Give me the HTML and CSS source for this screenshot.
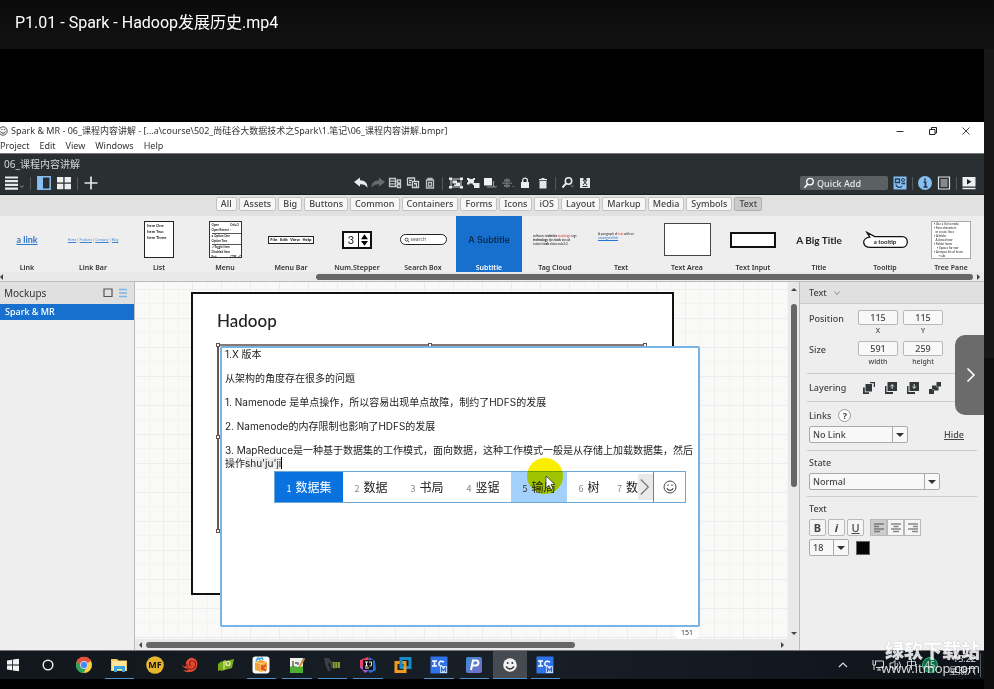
FILE: index.html
```html
<!DOCTYPE html>
<html lang="zh-CN">
<head>
<meta charset="utf-8">
<meta name="viewport" content="width=device-width, initial-scale=1">
<title>P1.01 - Spark - Hadoop发展历史.mp4</title>
<link rel="stylesheet" href="styles.css">
</head>
<body>
<header class="player-head"><h1>P1.01 - Spark - Hadoop发展历史.mp4</h1></header>
<main class="player">
<section class="video">
  <div class="win">
    <div class="titlebar">
      <svg class="app-ico" viewBox="0 0 10 10"><circle cx="3" cy="5" r="4.200" fill="#f4f4f4" stroke="#555"/><path d="M.5 5.500Q3 9 5.500 5.500M2 3v1M4.500 3v1" fill="none" stroke="#444"/></svg>
      <span class="win-title">Spark &amp; MR - 06_课程内容讲解 - [...a\course\502_尚硅谷大数据技术之Spark\1.笔记\06_课程内容讲解.bmpr]</span>
      <div class="win-btns">
        <button aria-label="Minimize"><svg viewBox="0 0 12 12"><path d="M2.500 6.500h7" stroke="#333" fill="none"/></svg></button>
        <button aria-label="Restore"><svg viewBox="0 0 12 12"><path d="M2.500 4.500h5.500v5h-5.500zM4.500 4.200V2.500h5v5.500H8" stroke="#222" fill="none"/></svg></button>
        <button aria-label="Close"><svg viewBox="0 0 12 12"><path d="M2.500 2.500l7 7M9.500 2.500l-7 7" stroke="#444" fill="none"/></svg></button>
      </div>
    </div>
    <nav class="menubar"><a href="#">Project</a><a href="#">Edit</a><a href="#">View</a><a href="#">Windows</a><a href="#">Help</a></nav>
  </div>

  <div class="dark">
    <div class="doc">06_课程内容讲解</div>
    <div class="tools">
      <div class="tools-left">
        <button class="wide" aria-label="Main menu"><svg viewBox="0 0 20 14"><path d="M1 1.500h13M1 5.200h13M1 8.900h13M1 12.600h13" stroke="#e8ebec" stroke-width="2.200"/><path d="M16 9.500l1.800 2 1.800-2" stroke="#8b9194" fill="none"/></svg></button>
        <i class="sep"></i>
        <button aria-label="Navigator"><svg viewBox="0 0 14 14"><path d="M.8.8h12.400v12.400H.8z" fill="none" stroke="#86bff0" stroke-width="1.500"/><path d="M1 1h5v12H1z" fill="#86bff0"/></svg></button>
        <button aria-label="Grid"><svg viewBox="0 0 14 14"><path d="M0 1h6.300v5.500H0zM7.600 1H14v5.500H7.600zM0 7.800h6.300v5.500H0zM7.600 7.800H14v5.500H7.600z" fill="#eceeef"/></svg></button>
        <i class="sep"></i>
        <button aria-label="Add"><svg viewBox="0 0 14 14"><path d="M.5 7h13M7 .5v13" stroke="#e3e6e7" stroke-width="1.700"/></svg></button>
      </div>
      <div class="tools-mid">
        <button aria-label="Undo"><svg viewBox="0 0 14 14"><path d="M0 6l6-4.500v2.700c5 .2 7.500 2.800 7.500 7.500-1.800-2.600-3.800-3.600-7.500-3.500v2.500z" fill="#e8ebec"/></svg></button>
        <button aria-label="Redo"><svg viewBox="0 0 14 14"><path d="M14 6L8 1.500v2.700C3 4.400.5 7 .5 11.700 2.300 9.100 4.300 8.100 8 8.200v2.500z" fill="#656b6e"/></svg></button>
        <button aria-label="Duplicate"><svg viewBox="0 0 14 14"><path d="M1.500 2.500h6v8h-6zM1.500 5.200h6M1.500 7.800h6M9.500 4h3v3h-3zM9.500 8.500h3v3h-3zM8 5.500h1M8 10h1" stroke="#c3c8ca" stroke-width="1.300" fill="none"/></svg></button>
        <button aria-label="Copy"><svg viewBox="0 0 14 14"><path d="M1.500 2h7v3M1.500 2v7h4M3 4.500h3M3 6.700h2M6.500 5.500h6v6h-6z" stroke="#d0d4d6" stroke-width="1.300" fill="none"/><path d="M8 7h3v4H9.800V8.500H8z" fill="#d0d4d6"/></svg></button>
        <button aria-label="Paste"><svg viewBox="0 0 14 14"><path d="M3.500 4h7v8h-7zM5 4V2.500h4V4M5.500 6.500h3v3.500h-3z" stroke="#b9bec0" stroke-width="1.300" fill="none"/></svg></button>
        <i class="sep"></i>
        <button aria-label="Group"><svg viewBox="0 0 14 14"><path d="M2 3h10v8H2z" stroke="#cfd3d5" fill="none"/><path d="M0 1.500h3v2.500H0zM11 1.500h3v2.500h-3zM0 10h3v2.500H0zM11 10h3v2.500h-3zM3.500 4.500h4.500v3H3.500zM7 6.500h4v3.500H5V8.500h2z" fill="#e8ebec"/></svg></button>
        <button aria-label="Ungroup"><svg viewBox="0 0 14 14"><path d="M1 2h2.500v1H7V2h2v2H8v3h1v1.500H6.500V7.500H3.500v1H1V6.500h1V4H1zM7 7h6.500v5H8V9H7z" fill="#e8ebec"/></svg></button>
        <button aria-label="Bring to front"><svg viewBox="0 0 14 14"><path d="M1 2h8v7.500H1z" fill="#f0f2f3"/><path d="M4 11h6.500V5M11 10l1.300 1.500L13.600 10" stroke="#9ba1a3" fill="none"/></svg></button>
        <button aria-label="Align"><svg viewBox="0 0 14 14"><path d="M3 3.500h6v2H3zM1 6.500h10v1.200H1zM3 8.700h6v2H3zM5.500 2h1v10h-1z" fill="#70777a"/><path d="M11.500 10l1 1 1-1" stroke="#70777a" fill="none"/></svg></button>
        <button aria-label="Lock"><svg viewBox="0 0 14 14"><path d="M3 6h8v6H3z" fill="#eceeef"/><path d="M4.700 6V4.300c0-2.800 4.600-2.800 4.600 0V6" stroke="#eceeef" stroke-width="1.300" fill="none"/></svg></button>
        <button aria-label="Delete"><svg viewBox="0 0 14 14"><path d="M3.500 5h7v7.500h-7zM3 3h8v1.300H3zM5.500 2h3v1h-3z" fill="#e3e6e7"/></svg></button>
        <i class="sep"></i>
        <button aria-label="Zoom"><svg viewBox="0 0 14 14"><circle cx="7.500" cy="5" r="3.200" stroke="#e8ebec" stroke-width="1.500" fill="none"/><path d="M5 7.500L1.500 11.500" stroke="#e8ebec" stroke-width="1.900"/><path d="M10 9.500l1.300 1.300 1.300-1.300" stroke="#9ba1a3" fill="none"/></svg></button>
        <button aria-label="Find"><svg viewBox="0 0 14 14"><path d="M2 2h3.500v2.500h3V2H12v10H2z" fill="#e3e6e7"/><path d="M5 4l4 5M9 4L5 9M4.500 10.500h5" stroke="#2a2f32" fill="none"/></svg></button>
      </div>
      <div class="tools-right">
        <label class="quick"><svg viewBox="0 0 12 12"><circle cx="7" cy="4.600" r="3.300" stroke="#fff" stroke-width="1.300" fill="none"/><path d="M4.800 7L1.500 10.800" stroke="#fff" stroke-width="1.600"/></svg><input type="text" placeholder="Quick Add" aria-label="Quick Add"></label>
        <button aria-label="UI library"><svg viewBox="0 0 14 14"><path d="M.5.5h13v13H.5z" fill="#86bff0"/><path d="M2.500 3h4v3.500h-4zM8.500 7.500h3v-1M3 8.500c.5 3.500 5 3.500 6 1.500" stroke="#26405a" stroke-width="1.300" fill="none"/><circle cx="10" cy="4" r="1.500" stroke="#26405a" fill="none"/></svg></button>
        <i class="sep"></i>
        <button aria-label="Properties"><svg viewBox="0 0 14 14"><circle cx="7" cy="7" r="7" fill="#86bff0"/><path d="M7 2.500v2M5.500 6H7.500v5M5.500 11h4" stroke="#223548" stroke-width="1.700" fill="none"/></svg></button>
        <button aria-label="Notes"><svg viewBox="0 0 14 14"><path d="M1.500 1h11v12h-11zM3.500 4h7M3.500 6h7M3.500 8h7M3.500 10h7" stroke="#dfe3e4" stroke-width="1.200" fill="none"/></svg></button>
        <i class="sep"></i>
        <button aria-label="Present"><svg viewBox="0 0 14 14"><path d="M.5 1h13v9.500H.5zM.5 11.800h13v1.400H.5z" fill="#eceeef"/><path d="M5 3l4.500 2.700L5 8.400z" fill="#222"/></svg></button>
      </div>
    </div>
  </div>

  <nav class="tabs">
    <button>All</button><button>Assets</button><button>Big</button><button>Buttons</button><button>Common</button><button>Containers</button><button>Forms</button><button>Icons</button><button>iOS</button><button>Layout</button><button>Markup</button><button>Media</button><button>Symbols</button><button class="on">Text</button>
  </nav>

  <div class="library">
    <div class="shelf">
      <figure><div class="pic"><span class="p-link">a link</span></div><figcaption>Link</figcaption></figure>
      <figure><div class="pic"><span class="p-linkbar"><u>Home</u> | <u>Products</u> | <u>Company</u> | <u>Blog</u></span></div><figcaption>Link Bar</figcaption></figure>
      <figure><div class="pic"><span class="p-list">Item One<br>Item Two<br>Item Three</span></div><figcaption>List</figcaption></figure>
      <figure><div class="pic"><span class="p-menu"><b>Open</b><b>Ctrl+O</b><b>Open Recent</b><b>›</b><i></i><b>● Option One</b><b></b><b>Option Two</b><b></b><i></i><b>✓ Toggle Item</b><b></b><b>Disabled Item</b><b></b><b>Exit</b><b>CTRL+Q</b></span></div><figcaption>Menu</figcaption></figure>
      <figure><div class="pic"><span class="p-menubar"><b>File</b><b>Edit</b><b>View</b><b>Help</b></span></div><figcaption>Menu Bar</figcaption></figure>
      <figure><div class="pic"><span class="p-step"><b>3</b><svg viewBox="0 0 12 16"><path d="M6 1.500l4 5.500H2zM6 14.500l4-5.500H2z"/></svg></span></div><figcaption>Num.Stepper</figcaption></figure>
      <figure><div class="pic"><span class="p-search"><svg viewBox="0 0 8 8"><circle cx="3.500" cy="3.500" r="2" fill="none" stroke="#222"/><path d="M5 5l2 2" stroke="#222"/></svg>search</span></div><figcaption>Search Box</figcaption></figure>
      <figure class="sel"><div class="pic"><span class="p-sub">A Subtitle</span></div><figcaption>Subtitle</figcaption></figure>
      <figure><div class="pic"><span class="p-cloud">software <b>statistics</b> <em>teachings</em> tags <b>technology</b> tips <b>tools</b> toread tutorial <b>web</b> video web2.0</span></div><figcaption>Tag Cloud</figcaption></figure>
      <figure><div class="pic"><span class="p-text">A paragraph of <em>text</em> with an <u>unassigned link</u></span></div><figcaption>Text</figcaption></figure>
      <figure><div class="pic"><span class="p-area"></span></div><figcaption>Text Area</figcaption></figure>
      <figure><div class="pic"><span class="p-input"></span></div><figcaption>Text Input</figcaption></figure>
      <figure><div class="pic"><span class="p-big">A Big Title</span></div><figcaption>Title</figcaption></figure>
      <figure><div class="pic"><span class="p-tip"><svg viewBox="0 0 48 18"><path d="M8 6L5 1.200l8 4.300h28c7 0 7 11 0 11H9C0 16.500-1 7 8 6z" fill="#fff" stroke="#111" stroke-width="1.300"/></svg><b>a tooltip</b></span></div><figcaption>Tooltip</figcaption></figure>
      <figure><div class="pic"><span class="p-tree">▪ Use a list to make<br>▪ Four characters<br>&nbsp; or create lines<br>▪ A folder<br>&nbsp; A closed row<br>▪ Folder items<br>&nbsp; &nbsp; ▪ Spaces for row<br>▪ An open list of items<br>&nbsp; &nbsp; &nbsp; ▪ sub</span></div><figcaption>Tree Pane</figcaption></figure>
    </div>
    <div class="hbar shelf-bar"><i class="tri l"></i><span class="track"><span class="thumb"></span></span><i class="tri r"></i></div>
  </div>

  <div class="work">
    <aside class="nav">
      <div class="nav-head"><h2>Mockups</h2>
        <button aria-label="Thumbnails"><svg viewBox="0 0 10 10"><path d="M1 1h8v7.500H1z" fill="none" stroke="#555" stroke-width="1.200"/></svg></button>
        <button aria-label="List view"><svg viewBox="0 0 10 10"><path d="M1 1.500h8M1 5h8M1 8.500h8" stroke="#7db7e6" stroke-width="1.500"/></svg></button>
      </div>
      <a class="nav-item" href="#">Spark &amp; MR</a>
    </aside>

    <div class="center">
      <div class="canvas-row">
        <div class="canvas">
          <div class="page"><h2>Hadoop</h2></div>
          <div class="selection"><i></i><i></i><i></i><i></i><i></i></div>
          <div class="editor" contenteditable="true" spellcheck="false" role="textbox" aria-label="Text">
            <p>1.X 版本</p>
            <p>从架构的角度存在很多的问题</p>
            <p>1. Namenode 是单点操作，所以容易出现单点故障，制约了HDFS的发展</p>
            <p>2. Namenode的内存限制也影响了HDFS的发展</p>
            <p>3. MapReduce是一种基于数据集的工作模式，面向数据，这种工作模式一般是从存储上加载数据集，然后操作<span class="compose">shu'ju'ji</span></p>
          </div>
          <span class="count">151</span>
          <div class="ime">
            <button class="first"><small>1</small>数据集</button>
            <button class="w2"><small>2</small>数据</button>
            <button class="w2"><small>3</small>书局</button>
            <button class="w2"><small>4</small>竖锯</button>
            <button class="w2 hover"><small>5</small>输局</button>
            <button class="w1"><small>6</small>树</button>
            <button class="cut"><small>7</small>数</button>
            <button class="more" aria-label="More"><svg viewBox="0 0 16 26"><path d="M3 5l8 8-8 8" fill="none" stroke="#777" stroke-width="1.300"/></svg></button>
            <button class="emoji" aria-label="Emoji"><svg viewBox="0 0 14 14"><circle cx="7" cy="7" r="6" fill="none" stroke="#444"/><path d="M3.800 8.300c1 2.800 5.400 2.800 6.400 0M5 4.500v1.500M9 4.500v1.500" fill="none" stroke="#444" stroke-width="1.100"/></svg></button>
          </div>
          <i class="halo"></i>
          <svg class="cursor" viewBox="0 0 12 16"><path d="M1 1v12l3-2.700 2 4.200 2-1-2-4h4z" fill="#fff" stroke="#333" stroke-width=".8"/></svg>
        </div>
        <div class="vbar"><i class="tri u"></i><span class="track"><span class="thumb"></span></span><i class="tri d"></i></div>
      </div>
      <div class="hbar canvas-bar"><i class="tri l"></i><span class="track"><span class="thumb"></span></span><i class="tri r"></i></div>
    </div>

    <aside class="props">
      <h2>Text <svg viewBox="0 0 8 8"><path d="M1.500 2.500L4 5.500l2.500-3" fill="none" stroke="#888"/></svg></h2>
      <div class="prop-body">
        <section>
          <div class="pair"><span class="lab">Position</span>
            <label><input type="text" value="115">X</label><label><input type="text" value="115">Y</label></div>
          <div class="pair"><span class="lab">Size</span>
            <label><input type="text" value="591">width</label><label><input type="text" value="259">height</label></div>
        </section>
        <section class="layering"><span class="lab">Layering</span>
          <button aria-label="To front"><svg viewBox="0 0 12 12"><path d="M2.500 2H9v7.500H2.500zM0 5.500h1.800V10.300H6V12H0zM7 0h5v5h-1.300V1.300H7z" fill="#33383a"/></svg></button>
          <button aria-label="Forward"><svg viewBox="0 0 12 12"><path d="M2.500 0H12v9H2.500zM0 4h1.500v6H8v2H0z" fill="#33383a"/><path d="M7.200 7V3M5.500 4.500l1.700-2 1.700 2" fill="none" stroke="#ddd"/></svg></button>
          <button aria-label="Backward"><svg viewBox="0 0 12 12"><path d="M2.500 0H12v9H2.500zM0 4h1.500v6H8v2H0z" fill="#33383a"/><path d="M7.200 2v4M5.500 4.500l1.700 2 1.700-2" fill="none" stroke="#ddd"/></svg></button>
          <button aria-label="To back"><svg viewBox="0 0 12 12"><path d="M7.500 0H12v4.500H9.500V8.500H5V12H0V7h3V3.500h4.500z" fill="#33383a"/><path d="M7.500 3.500V5H9.500M3 7.500h2v1" stroke="#aaa" stroke-width=".6" fill="none"/></svg></button>
        </section>
        <section class="links">
          <div class="line"><label for="lk">Links</label><button class="help" aria-label="Help">?</button></div>
          <div class="line spread"><span class="sel-box link-sel"><select id="lk"><option>No Link</option></select></span><a href="#">Hide</a></div>
        </section>
        <section class="state">
          <label for="st">State</label>
          <span class="sel-box"><select id="st"><option>Normal</option></select></span>
        </section>
        <section class="textsec">
          <span>Text</span>
          <div class="line fmt"><button><b>B</b></button><button><i>i</i></button><button><u>U</u></button>
            <span class="aligns">
              <button class="on" aria-label="Left"><svg viewBox="0 0 12 12"><path d="M1 2h10M1 4.500h5M1 7h10M1 9.500h6" stroke="#777" stroke-width="1.300"/></svg></button>
              <button aria-label="Center"><svg viewBox="0 0 12 12"><path d="M1 2h10M3.500 4.500h5M1 7h10M3 9.500h6" stroke="#888" stroke-width="1.300"/></svg></button>
              <button aria-label="Right"><svg viewBox="0 0 12 12"><path d="M1 2h10M6 4.500h5M1 7h10M5 9.500h6" stroke="#888" stroke-width="1.300"/></svg></button>
            </span>
          </div>
          <div class="line"><span class="sel-box size-sel"><select aria-label="Font size"><option>18</option></select></span><button class="swatch" aria-label="Colour"></button></div>
        </section>
      </div>
    </aside>
  </div>

  <footer class="taskbar">
    <div class="apps">
      <button aria-label="Start"><svg viewBox="0 0 18 18"><path d="M3 4.500l5-.8v4.900H3zM8.800 3.600L15 2.700v5.900H8.800zM3 9.400h5v4.900l-5-.8zM8.800 9.400H15v5.900l-6.200-.9z" fill="#f2f2f2"/></svg></button>
      <button aria-label="Search"><svg viewBox="0 0 18 18"><circle cx="9" cy="9" r="4.800" fill="none" stroke="#e8e8e8" stroke-width="1.500"/></svg></button>
      <button aria-label="Chrome"><svg viewBox="0 0 18 18"><circle cx="9" cy="9" r="8" fill="#ffd044"/><path d="M9 9L2.100 5A8 8 0 0 1 15.900 5z" fill="#e5503c"/><path d="M9 9L2.100 5a8 8 0 0 0 6.400 12l3.300-6z" fill="#28a35a"/><path d="M9 5h7a8 8 0 0 0-14-.2L5.500 11z" fill="#e5503c"/><circle cx="9" cy="9" r="3.700" fill="#4587f4" stroke="#e8f0ee" stroke-width=".8"/></svg></button>
      <button class="run" aria-label="Explorer"><svg viewBox="0 0 18 18"><path d="M1 3h6l1.500 1.500H17V15H1z" fill="#f2c75e"/><path d="M2 5h14v9H2z" fill="#ffe49a"/><path d="M4 10h11v6h-3v-3H7v3H4z" fill="#35a4df"/></svg></button>
      <button aria-label="MF"><svg viewBox="0 0 18 18"><circle cx="9" cy="9" r="8.800" fill="#e6b62e"/><text x="9" y="12.400" text-anchor="middle" class="mf">MF</text></svg></button>
      <button aria-label="Shell"><svg viewBox="0 0 18 18"><path d="M1 8c1 3 3 3 4 2C4 5 8 1 12 2c5 1 6 8 2 12-4 3-9 3-12 0 4 1 6 0 6 0C5 12 1 12 1 8z" fill="#e34a32"/><path d="M10 10c-3-2-1-6 2-5 4 1 3 7-1 8-3 .5-6-2-5-5" fill="none" stroke="#8f2019" stroke-width="1.100"/></svg></button>
      <button aria-label="Design"><svg viewBox="0 0 18 18"><path d="M1 8l4-3-1 9-3 1zM4 6l13-3-2 9-11 3z" fill="#78aa20"/><path d="M6 5l3-1-1 9-2 1z" fill="#b6d44f"/><circle cx="11" cy="7.500" r="2" fill="none" stroke="#eef6c8" stroke-width="1.200"/></svg></button>
      <button class="run" aria-label="Player"><svg viewBox="0 0 18 18"><rect x=".5" y=".5" width="17" height="17" rx="3" fill="#fafafa"/><path d="M3 6l6-2 6 2v8l-6 2-6-2z" fill="#f4a338"/><path d="M3 6l6 2 6-2M9 8v8" stroke="#ffd77b" fill="none"/><path d="M4 5l2-3 2 2M7 3l3-1 1 2" stroke="#35a7dc" stroke-width="1.500" fill="none"/><path d="M10 9v5M14 9l-4 3 4 3" stroke="#e24d26" stroke-width="1.700" fill="none"/></svg></button>
      <button class="run" aria-label="Editor"><svg viewBox="0 0 18 18"><path d="M2 2h13v15H2z" fill="#eef0e8"/><path d="M2 11c4-3 8 2 13-1v7H2z" fill="#4fae35"/><path d="M5 5v6M7 7h2M10 6v3M11 12l5-10" stroke="#555" stroke-width="1.300"/><path d="M11 11l5-9 1 1-5 9z" fill="#ea9c2a"/></svg></button>
      <button class="run" aria-label="Screen tool"><svg viewBox="0 0 18 18"><path d="M1 2h5l2 4-3 2 3 7H5L2 8z" fill="#3a4044"/><path d="M7 5l5 1v7l-4-1z" fill="#3f4a34"/><path d="M10 6h7v6h-7z" fill="#8b9e38"/><path d="M12 6v6M14.500 6v6" stroke="#4f621e"/></svg></button>
      <button class="run" aria-label="IntelliJ"><svg viewBox="0 0 18 18"><path d="M1 4l8-3 2 6-7 7-3-2z" fill="#e84364"/><path d="M10 1l6 4 1 9-6 3-3-4z" fill="#2171df"/><path d="M1 11l5-2 3 6-3 2z" fill="#a25bd0"/><path d="M4 4h10v10H4z" fill="#141414"/><path d="M6 6h3M7.500 6v4M6 10h3M10 6h2.500v3q0 1.500-2 1M6 12h4" stroke="#eee" fill="none"/></svg></button>
      <button aria-label="VMware"><svg viewBox="0 0 18 18"><path d="M7 2.500h9v9H7z" fill="none" stroke="#168bc8" stroke-width="3"/><path d="M2 6.500h9v9H2z" fill="none" stroke="#f29a1d" stroke-width="3"/><path d="M7 4v6" stroke="#168bc8" stroke-width="3"/></svg></button>
      <button class="run" aria-label="ICM"><svg viewBox="0 0 18 18"><path d="M.5.5h17v17H.5z" fill="#2f72ea"/><path d="M2 5h5M4.500 5v5M2 10h5M14 6q-4-2-5 1t3 3" fill="none" stroke="#fff" stroke-width="1.500"/><path d="M10 10h7v7h-7z" fill="#c9dcff"/><path d="M11.500 16v-4l2 2.500 2-2.500v4" fill="none" stroke="#2767cf" stroke-width="1.200"/></svg></button>
      <button class="run" aria-label="P"><svg viewBox="0 0 18 18"><defs><linearGradient id="pg" x2="1" y2="1"><stop stop-color="#3b8dd0"/><stop offset="1" stop-color="#786bc8"/></linearGradient></defs><rect x="1" y="1" width="16" height="16" rx="2" fill="url(#pg)"/><path d="M6 14L8 4.500h3.500c3 0 2.500 5-1 5H7.500" stroke="#fff" stroke-width="2" fill="none"/></svg></button>
      <button class="run active" aria-label="Balsamiq"><svg viewBox="0 0 18 18"><circle cx="9" cy="9" r="6.800" fill="#f1f1f1"/><path d="M5 10.500q4 5 8 0" fill="none" stroke="#333" stroke-width="1.300"/><circle cx="6.700" cy="7" r="1" fill="#333"/><circle cx="11.300" cy="7" r="1" fill="#333"/></svg></button>
      <button class="run" aria-label="ICM"><svg viewBox="0 0 18 18"><path d="M.5.5h17v17H.5z" fill="#2f72ea"/><path d="M2 5h5M4.500 5v5M2 10h5M14 6q-4-2-5 1t3 3" fill="none" stroke="#fff" stroke-width="1.500"/><path d="M10 10h7v7h-7z" fill="#c9dcff"/><path d="M11.500 16v-4l2 2.500 2-2.500v4" fill="none" stroke="#2767cf" stroke-width="1.200"/></svg></button>
    </div>
    <div class="tray">
      <svg class="up" viewBox="0 0 12 12"><path d="M2 8l4-4 4 4" fill="none" stroke="#ddd" stroke-width="1.200"/></svg>
      <svg viewBox="0 0 12 12"><path d="M3 2h8.500v6.500H4M1 1v5h2.500V2M2 6v5M5 11h4M7 9v2" fill="none" stroke="#d8d8d8"/></svg>
      <svg viewBox="0 0 12 12"><path d="M1 4h2.500L6 1.500v9L3.500 8H1zM8 4q2 2 0 4M10 2.500q3 3.500 0 7" fill="none" stroke="#ddd"/></svg>
      <span class="lang">中</span>
      <span class="badge">45</span>
      <time class="clock">15:22<br>星期六</time>
    </div>
  </footer>
  <div class="mark"><strong>绿软下载站</strong><span>www.itmop.com</span></div>
</section>
<button class="next" aria-label="Next"><svg viewBox="0 0 12 16"><path d="M2.500 1.500L9 8l-6.500 6.500" fill="none" stroke="#fff" stroke-width="1.600"/></svg></button>
<div class="edge"></div>
</main>
</body>
</html>
```
FILE: styles.css
```css
* { box-sizing: border-box; }
html, body { height: 100%; }
body {
  margin: 0;
  display: flex;
  flex-direction: column;
  overflow: hidden;
  background: #000;
  color: #333;
  font: 9px/12px "Noto Sans", "Open Sans", "Noto Sans CJK SC", sans-serif;
}
h1, h2, p, figure { margin: 0; font-weight: 400; }
button { padding: 0; border: 0; background: none; color: inherit; font: inherit; }
input, select { font: inherit; color: inherit; }
a { color: inherit; text-decoration: none; }
svg { display: block; flex: none; }

.player-head {
  flex: none;
  height: 49px;
  padding: 0 15px;
  display: flex;
  align-items: center;
  background: linear-gradient(#0b0b0b, #121212);
}
.player-head h1 { color: #fff; font: 16px/20px "Roboto", "Noto Sans CJK SC", sans-serif; padding-bottom: 4px; }
.player { flex: 1; min-height: 0; display: flex; position: relative; }
.video {
  flex: 1;
  min-width: 0;
  padding: 73px 0 10px;
  display: flex;
  flex-direction: column;
  position: relative;
  overflow: hidden;
}
.edge { flex: none; width: 10px; background: linear-gradient(#171717 309px, #0e0e0e 309px); }
.next {
  position: absolute;
  right: 10px;
  top: 286px;
  width: 29px;
  height: 80px;
  border-radius: 10px 0 0 10px;
  background: #6b6b6b;
  display: flex;
  align-items: center;
  justify-content: center;
}
.next svg { width: 12px; height: 16px; margin-left: 3px; }

/* window chrome */
.win { background: #fff; height: 31px; flex: none; }
.titlebar { display: flex; align-items: center; height: 17px; }
.app-ico { width: 10px; height: 10px; }
.win-title { flex: 1; margin-left: 1px; white-space: nowrap; }
.win-btns { display: flex; gap: 21px; padding-right: 12px; }
.win-btns svg { width: 12px; height: 12px; }
.menubar { display: flex; gap: 10px; line-height: 13px; }

/* dark toolbar */
.dark { flex: none; height: 42px; background: #2a2f32; border-top: 1px solid #777; border-bottom: 1px solid #1b1f21; }
.doc { height: 18px; padding: 3px 4px 0; font-size: 10px; line-height: 14px; color: #d4d7d8; }
.tools { height: 22px; display: grid; grid-template-columns: minmax(0, 352fr) 242px minmax(0, 390fr); align-items: center; }
.tools-left, .tools-right { display: flex; align-items: center; gap: 6px; }
.tools-left { padding-left: 4px; }
.tools-left svg, .tools-right button svg { width: 14px; height: 14px; }
.tools-left .wide svg { width: 20px; }
.tools-right { justify-content: flex-end; padding-right: 8px; gap: 5px; }
.tools-mid { display: grid; grid-template-columns: repeat(5, 1fr) 8px repeat(6, 1fr) 8px repeat(2, 1fr); align-items: center; justify-items: center; }
.tools-mid svg { width: 14px; height: 14px; }
.sep { width: 1px; height: 13px; background: #52585b; }
.quick { display: flex; align-items: center; width: 88px; height: 14px; padding-left: 3px; gap: 2px; background: #5b6063; border-radius: 2px; }
.quick svg { width: 12px; height: 12px; }
.quick input { width: 66px; height: 14px; padding: 0; border: 0; background: none; color: #fff; font-weight: 500; }
.quick input::placeholder { color: #e6e8e9; opacity: 1; }

.tabs { flex: none; height: 21px; display: flex; justify-content: center; align-items: center; gap: 2px; background: #e1e1e1; padding: 0 6px 3px 0; }
.tabs button { height: 14px; padding: 0 4px; line-height: 12px; border: 1px solid #c2c2c2; border-radius: 2px; background: #f7f7f7; color: #444; font-weight: 500; }
.tabs .on { background: #cbcbcb; border-color: #b0b0b0; }

/* component shelf */
.library { flex: none; height: 66px; background: #eee; border-bottom: 1px solid #bbb; }
.shelf { display: grid; grid-template-columns: repeat(15, minmax(0, 1fr)); margin-left: -6px; height: 56px; }
.shelf figure { display: flex; flex-direction: column; align-items: center; justify-content: space-between; overflow: hidden; }
.shelf .sel { background: #1770cd; color: #fff; }
figcaption { font: 600 7px/9px "Noto Sans", sans-serif; color: #333; white-space: nowrap; }
.sel figcaption { color: #fff; }
.pic { height: 47px; display: flex; align-items: center; justify-content: center; color: #222; }
.p-link { color: #3178c8; text-decoration: underline; font: 700 9px/12px "Lato", sans-serif; }
.p-linkbar { font-size: 3px; white-space: nowrap; color: #555; }
.p-linkbar u { color: #3f85d4; }
.p-list { width: 30px; height: 37px; padding: 1px 2px; border: 1px solid #222; background: #fff; font: 700 4px/6px "Lato", sans-serif; white-space: nowrap; }
.p-menu { width: 33px; height: 37px; padding: 1px 2px; border: 1px solid #333; background: #fff; display: grid; grid-template-columns: 1fr auto; font: 3px/5px "Lato", sans-serif; white-space: nowrap; overflow: hidden; }
.p-menu i { grid-column: 1 / -1; height: 1px; background: #555; }
.p-menubar { width: 46px; height: 8px; border: 1px solid #222; background: #fff; display: flex; justify-content: space-around; font-size: 4px; line-height: 6px; }
.p-step { width: 30px; height: 18px; border: 2px solid #111; background: #fff; display: flex; font: 11px/14px "Lato", sans-serif; }
.p-step b { flex: 1; text-align: center; font-weight: 400; border-right: 1px solid #111; }
.p-step svg { width: 11px; height: 14px; }
.p-search { width: 47px; height: 11px; padding-left: 3px; border: 1px solid #222; border-radius: 6px; background: #fff; display: flex; align-items: center; gap: 1px; font-size: 5px; line-height: 7px; color: #555; }
.p-search svg { width: 6px; height: 6px; }
.p-sub { color: #08213f; font: 500 9px/12px "Inter", sans-serif; }
.p-big { font: 700 10px/12px "Lato", sans-serif; white-space: nowrap; }
.p-cloud { width: 44px; font: 3px/4px "Lato", sans-serif; }
.p-cloud em, .p-text em { color: #d33; font-style: normal; }
.p-text { width: 46px; padding-bottom: 8px; font: 3px/4px "Lato", sans-serif; }
.p-text u { color: #2277d4; }
.p-area { width: 47px; height: 33px; border: 1px solid #444; background: #fff; }
.p-input { width: 46px; height: 16px; border: 2px solid #111; background: #fff; }
.p-tip { display: grid; place-items: center; }
.p-tip svg, .p-tip b { grid-area: 1 / 1; }
.p-tip svg { width: 47px; height: 18px; }
.p-tip b { font: 700 6px/8px "Lato", sans-serif; padding-top: 4px; }
.p-tree { width: 40px; height: 38px; padding: 0 2px; border: 1px solid #aaa; background: #fff; font: 3px/4px "Lato", sans-serif; white-space: nowrap; overflow: hidden; }

/* scroll bars */
.hbar { display: flex; align-items: center; gap: 4px; height: 9px; background: #e9e9e9; }
.hbar .track { flex: 1; height: 6px; display: flex; }
.thumb { background: #666; border-radius: 3px; }
.shelf-bar .thumb { width: 68%; margin-left: auto; }
.shelf-bar { padding-right: 4px; }
.canvas-bar { padding: 0 15px 0 4px; flex: none; height: 11px; }
.canvas-bar .thumb { width: 68%; }
.tri { width: 0; height: 0; border: 3px solid transparent; flex: none; }
.tri.l { border-left: 0; border-right-color: #444; }
.tri.r { border-right: 0; border-left-color: #444; }
.tri.u { border-top: 0; border-bottom-color: #444; }
.tri.d { border-bottom: 0; border-top-color: #444; }
.vbar { flex: none; width: 11px; display: flex; flex-direction: column; align-items: center; gap: 13px; padding: 6px 0 4px; background: #e9e9e9; }
.vbar .track { flex: 1; width: 6px; display: flex; }
.vbar .thumb { width: 6px; height: 58%; }

.work { flex: 1; min-height: 0; display: flex; background: #eee; }
.nav { flex: none; width: 135px; border-right: 1px solid #bbb; }
.nav-head { display: flex; align-items: center; gap: 5px; height: 22px; padding: 0 6px 0 4px; background: #e0e0e0; }
.nav-head h2 { flex: 1; font-size: 10px; }
.nav-head svg { width: 10px; height: 10px; }
.nav-item { display: block; height: 16px; padding-left: 5px; line-height: 15px; background: #1770cd; color: #fff; font-weight: 500; }

.center { flex: 1; min-width: 0; display: flex; flex-direction: column; }
.canvas-row { flex: 1; min-height: 0; display: flex; }
.canvas {
  flex: 1;
  position: relative;
  overflow: hidden;
  background-color: #f9faf8;
  background-image:
    linear-gradient(90deg, #ecedec 1px, transparent 1px), linear-gradient(#ecedec 1px, transparent 1px),
    linear-gradient(90deg, #f4f5f3 1px, transparent 1px), linear-gradient(#f4f5f3 1px, transparent 1px);
  background-size: 29px 29px;
  background-position: 28px 7px, 28px 7px, 14px 21px, 14px 21px;
}
/* canvas objects, placed freely */
.page { position: absolute; left: 56px; top: 10px; width: 483px; height: 303px; border: 2px solid #111; background: #fff; padding: 17px 24px; }
.page h2 { font: 500 17px/20px "Lato", sans-serif; color: #222; }
.selection { position: absolute; left: 82px; top: 62px; width: 429px; height: 188px; border-top: 2px solid #8a7772; border-left: 2px solid #6b5752; }
.selection i { position: absolute; width: 4px; height: 4px; border: 1px solid #6b4f48; background: #fff; }
.selection i:nth-child(1) { left: -3px; top: -3px; }
.selection i:nth-child(2) { left: 49%; top: -3px; }
.selection i:nth-child(3) { right: -1px; top: -3px; }
.selection i:nth-child(4) { left: -3px; top: 48%; }
.selection i:nth-child(5) { left: -3px; bottom: -1px; }
.editor { position: absolute; left: 85px; top: 64px; width: 480px; height: 281px; padding: 0 0 0 3px; border: 2px solid #77b5e6; border-radius: 2px; background: #fff; color: #222; font: 10px/13px "Inter", "Noto Sans CJK SC", sans-serif; outline: none; }
.editor p + p { margin-top: 11px; }
.compose { background: #eee; border-right: 1px solid #000; }
.count { position: absolute; left: 540px; top: 345px; padding: 0 6px; border-radius: 5px; background: #fff; font-size: 7px; }
.ime { position: absolute; left: 139px; top: 189px; width: 412px; height: 32px; display: flex; align-items: stretch; border: 1px solid #6aa9da; background: #fff; color: #222; font: 12px/30px "Noto Sans CJK SC", sans-serif; }
.ime button { flex: none; white-space: nowrap; }
.ime small { margin-right: 4px; font-size: 9px; color: #888; }
.ime .first { width: 68px; background: #0a72de; color: #fff; }
.ime .first small { color: #fff; }
.ime .w2 { width: 56px; }
.ime .w1 { width: 44px; }
.ime .hover { background: #a3d1fb; }
.ime .hover small { color: #333; }
.ime .cut { width: 27px; text-align: right; overflow: hidden; }
.ime .more { width: 15px; margin: 2px 0; background: #e9e9e9; }
.ime .more svg { width: 15px; height: 26px; }
.ime .emoji { flex: 1; display: flex; align-items: center; justify-content: center; border-left: 1px solid #3f8ccc; }
.emoji svg { width: 14px; height: 14px; }
.halo { position: absolute; left: 392px; top: 176px; width: 36px; height: 36px; border-radius: 50%; background: #fbee00; mix-blend-mode: multiply; }
.cursor { position: absolute; left: 410px; top: 193px; width: 12px; height: 16px; }

/* properties */
.props { flex: none; width: 185px; border-left: 1px solid #bbb; color: #444; font-weight: 500; }
.props h2 { display: flex; align-items: center; gap: 6px; height: 22px; padding-left: 9px; font-size: 9px; font-weight: 500; background: #e0e0e0; border-bottom: 1px solid #ccc; }
.props h2 svg { width: 8px; height: 8px; }
.prop-body { padding: 0 7px; }
.prop-body section { padding: 0 2px; border-bottom: 1px solid #ccc; }
.prop-body section:last-child { border: 0; }
.prop-body section:first-child { padding-top: 6px; height: 70px; }
.pair { display: flex; gap: 5px; height: 31px; }
.lab { width: 44px; padding-top: 3px; }
.pair label { display: flex; flex-direction: column; align-items: center; font-size: 7px; line-height: 11px; }
.pair input { width: 40px; height: 15px; padding: 0; text-align: center; font-size: 9px; border: 1px solid #b8b8b8; border-radius: 2px; background: #f8f8f8; }
.layering { display: flex; align-items: center; gap: 10px; height: 28px; }
.layering .lab { padding: 0; }
.layering svg { width: 12px; height: 12px; }
.line { display: flex; align-items: center; gap: 7px; }
.prop-body .links { height: 49px; padding-top: 7px; }
.help { width: 13px; height: 13px; border: 1px solid #999; border-radius: 50%; line-height: 11px; font-weight: 700; background: #fff; }
.spread { justify-content: space-between; padding: 4px 11px 0 0; }
.spread a { text-decoration: underline; }
.sel-box { position: relative; display: block; height: 17px; width: 131px; }
.sel-box::after { content: ""; position: absolute; right: 4px; top: 7px; border: 4px solid transparent; border-top-color: #333; border-bottom: 0; }
.sel-box::before { content: ""; position: absolute; right: 15px; top: 1px; bottom: 1px; width: 1px; background: #aaa; }
.sel-box select { width: 100%; height: 17px; padding: 0 3px; appearance: none; border: 1px solid #aaa; border-radius: 2px; background: #f8f8f8; }
.link-sel { width: 99px; }
.size-sel { width: 40px; }
.prop-body .state { height: 46px; padding-top: 6px; }
.state label { display: block; margin-bottom: 4px; }
.prop-body .textsec { padding-top: 6px; }
.textsec > span { display: block; margin-bottom: 4px; }
.fmt { gap: 2px; margin-bottom: 3px; }
.fmt button { width: 17px; height: 17px; border: 1px solid #b8b8b8; border-radius: 2px; background: #f5f5f5; font-size: 11px; display: flex; align-items: center; justify-content: center; }
.fmt button i { font-weight: 700; }
.aligns { display: flex; margin-left: 4px; }
.aligns button { border-radius: 0; }
.aligns svg { width: 12px; height: 12px; }
.aligns .on { background: #ccc; }
.swatch { width: 14px; height: 14px; background: #050505; border: 1px solid #666; }

/* taskbar */
.taskbar { flex: none; height: 29px; display: flex; justify-content: space-between; background: linear-gradient(90deg, #12161d, #181f26 50%, #0e131a); border-top: 1px solid #777; }
.apps { display: grid; grid-template-columns: repeat(16, 1fr); width: 568px; margin-left: -5px; }
.apps button { display: flex; align-items: center; justify-content: center; margin: 0 3px; border-bottom: 1px solid transparent; }
.apps svg { width: 18px; height: 18px; }
.apps .run { border-color: #4f8fcb; }
.apps .active { margin: 0 1px; background: #454b50; }
.mf { font: 700 9px "Noto Sans", sans-serif; fill: #111; }
.tray { display: flex; align-items: center; gap: 5px; padding-right: 3px; color: #ddd; }
.tray svg { width: 12px; height: 12px; }
.tray .up { margin-right: 18px; }
.lang { font-size: 11px; }
.badge { width: 16px; height: 16px; border: 1px solid #22b573; border-radius: 50%; background: #126b47; text-align: center; line-height: 14px; font-size: 9px; }
.clock { width: 38px; padding-right: 4px; text-align: right; line-height: 12px; border-right: 1px solid #556; }
.mark { position: absolute; right: 4px; bottom: 12px; display: flex; flex-direction: column; align-items: flex-end; color: #fff; opacity: .85; }
.mark strong { font: 900 19px/20px "Noto Sans CJK SC", sans-serif; text-shadow: 0 0 1px #999; }
.mark span { font: 13px/17px "Open Sans", sans-serif; }
```
